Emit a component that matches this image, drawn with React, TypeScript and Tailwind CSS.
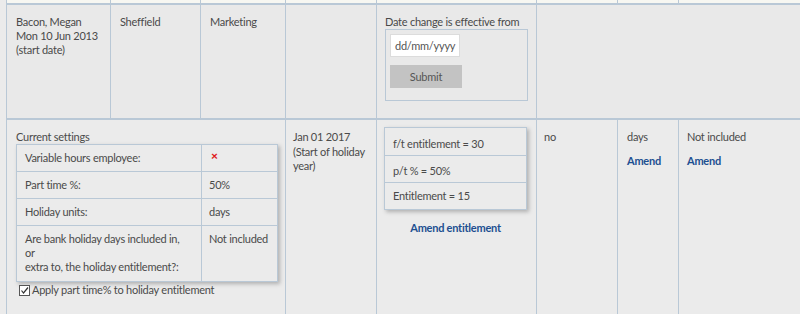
import React from "react";

const B = "border-[#b9c8d6]";

export default function App() {
  const cell = `border-r ${B} align-top`;
  return (
    <div className="w-[800px] h-[314px] overflow-hidden bg-[#ebebeb] text-[#4a4a4a] text-[11px] leading-[14px] tracking-[-0.25px]" style={{ fontFamily: "Lato, 'Open Sans', sans-serif" }}>
      <div className={`ml-[6px] grid grid-cols-[104px_90px_85px_91px_160px_81px_61px_1fr] border-l ${B}`}>
        {/* top strip */}
        {Array.from({ length: 8 }).map((_, i) => (
          <div key={i} className={`h-[5px] bg-[#f7f7f2] border-b-2 ${B} ${i < 7 ? `border-r ${B}` : ""}`} />
        ))}
        {/* row 1 */}
        <div className={`${cell} h-[115px] border-b-2 bg-[#e9e9e9] pl-[9px] pt-[10px]`}>
          Bacon, Megan<br />Mon 10 Jun 2013<br />(start date)
        </div>
        <div className={`${cell} border-b-2 bg-[#e9e9e9] pl-[9px] pt-[10px]`}>Sheffield</div>
        <div className={`${cell} border-b-2 bg-[#e9e9e9] pl-[9px] pt-[10px]`}>Marketing</div>
        <div className={`${cell} border-b-2 bg-[#e9e9e9]`} />
        <div className={`${cell} border-b-2 bg-[#e9e9e9] pl-[8px] pt-[10px]`}>
          <div>Date change is effective from</div>
          <div className={`w-[143px] h-[72px] border ${B} px-[4px] pt-[4px]`}>
            <div className="w-[70px] h-[23px] bg-white border border-[#dcdcdc] pl-[4px] flex items-center text-[#555]">dd/mm/yyyy</div>
            <div className="mt-[8px] w-[72px] h-[23px] bg-[#c3c3c3] flex items-center justify-center text-[#555]">Submit</div>
          </div>
        </div>
        <div className={`col-span-3 border-b-2 ${B} bg-[#e9e9e9]`} />
        {/* row 2 */}
        <div className={`col-span-3 ${cell} bg-[#ebebeb] pl-[9px] pt-[10px] h-[200px]`}>
          <div>Current settings</div>
          <div className={`w-[262px] border ${B} shadow-[2px_2px_4px_rgba(0,0,0,0.25)]`}>
            {[
              ["Variable hours employee:", "x"],
              ["Part time %:", "50%"],
              ["Holiday units:", "days"],
            ].map(([l, v]) => (
              <div key={l} className={`flex h-[27px] border-b ${B}`}>
                <div className={`w-[185px] border-r ${B} pl-[8px] flex items-center`}>{l}</div>
                <div className="pl-[7px] flex items-center">
                  {v === "x" ? <span className="text-[#e01b1b] font-black text-[12px] leading-none -mt-[4px] ml-[2px]">×</span> : v}
                </div>
              </div>
            ))}
            <div className="flex h-[55px]">
              <div className={`w-[185px] border-r ${B} pl-[8px] pt-[6px]`}>
                Are bank holiday days included in,<br />or<br />extra to, the holiday entitlement?:
              </div>
              <div className="pl-[7px] pt-[6px]">Not included</div>
            </div>
          </div>
          <div className="flex items-center mt-[1px] ml-[3px]">
            <span className="w-[11px] h-[11px] border border-[#555] bg-white flex items-center justify-center mr-[2px]">
              <svg width="9" height="9" viewBox="0 0 9 9"><path d="M1.5 4.5 L3.5 7 L8 1.5" stroke="#333" strokeWidth="1.2" fill="none" /></svg>
            </span>
            Apply part time% to holiday entitlement
          </div>
        </div>
        <div className={`${cell} pl-[7px] pt-[10px] leading-[14.5px]`}>
          Jan 01 2017<br />(Start of holiday<br />year)
        </div>
        <div className={`${cell} pl-[7px] pt-[7px]`}>
          <div className={`w-[143px] border ${B} shadow-[2px_2px_4px_rgba(0,0,0,0.25)]`}>
            <div className={`h-[28px] border-b ${B} pl-[8px] flex items-center pt-[4px]`}>f/t entitlement = 30</div>
            <div className={`h-[27px] border-b ${B} pl-[8px] flex items-center pt-[4px]`}>p/t % = 50%</div>
            <div className="h-[26px] pl-[8px] flex items-center">Entitlement = 15</div>
          </div>
          <div className="mt-[11px] w-[143px] text-center font-bold text-[#1d4f91]">Amend entitlement</div>
        </div>
        <div className={`${cell} pl-[7px] pt-[10px]`}>no</div>
        <div className={`${cell} pl-[9px] pt-[10px]`}>
          <div>days</div>
          <div className="mt-[10px] font-bold text-[#1d4f91]">Amend</div>
        </div>
        <div className="pl-[8px] pt-[10px]">
          <div>Not included</div>
          <div className="mt-[10px] font-bold text-[#1d4f91]">Amend</div>
        </div>
      </div>
    </div>
  );
}
